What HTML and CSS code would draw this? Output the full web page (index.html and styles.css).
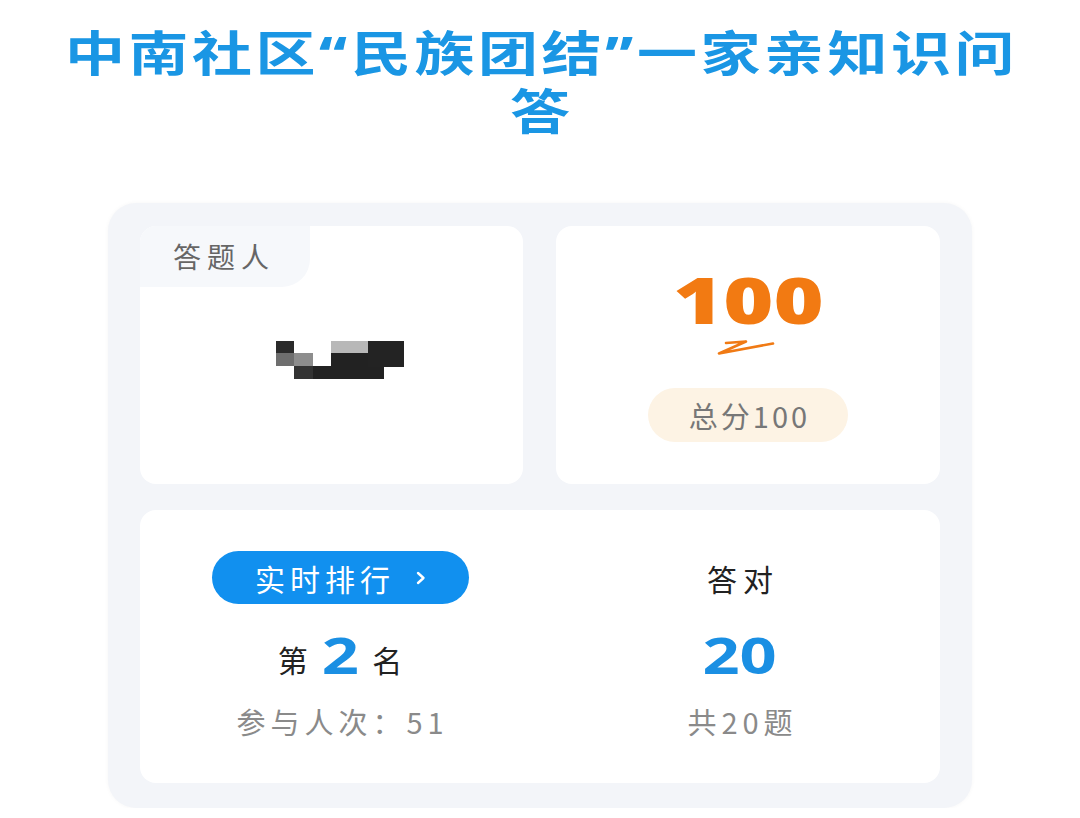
FILE: index.html
```html
<!DOCTYPE html>
<html lang="zh-CN">
<head>
<meta charset="utf-8">
<title>中南社区“民族团结”一家亲知识问答</title>
<link rel="stylesheet" href="styles.css">
</head>
<body>
<h1 class="title"><span class="line">中南社区<span class="q">“</span>民族团结<span class="q">”</span>一家亲知识问</span><span class="line">答</span></h1>
<main class="panel">
  <section class="card person">
    <div class="tab">答题人</div>
    <div class="name">
      <svg width="128" height="38" viewBox="0 0 128 38" aria-label="打码姓名">
        <rect x="0" y="0" width="18" height="12" fill="#2b2b2b"/>
        <rect x="0" y="12" width="18" height="13" fill="#6e6e6e"/>
        <rect x="18" y="12" width="19" height="13" fill="#8d8d8d"/>
        <rect x="18" y="25" width="19" height="13" fill="#333"/>
        <rect x="37" y="25" width="18" height="13" fill="#222"/>
        <rect x="55" y="0" width="37" height="12" fill="#b8b8b8"/>
        <rect x="55" y="12" width="53" height="26" fill="#222"/>
        <rect x="92" y="0" width="36" height="26" fill="#232323"/>
      </svg>
    </div>
  </section>
  <section class="card score">
    <div class="big-score"><span>100</span></div>
    <svg class="swoosh" width="60" height="18" viewBox="0 0 60 18">
      <path d="M11 5 L31 3.5 L4 15.5 L58 5.5" fill="none" stroke="#f07a14" stroke-width="2.6" stroke-linejoin="round" stroke-linecap="round"/>
    </svg>
    <div class="pill">总分100</div>
  </section>
  <section class="card stats">
    <div class="col">
      <div class="row r1"><button class="rank-btn">实时排行<svg width="12" height="16" viewBox="0 0 12 16"><path d="M3 3 L8.5 8 L3 13" fill="none" stroke="#fff" stroke-width="2.4" stroke-linecap="round" stroke-linejoin="round"/></svg></button></div>
      <div class="row r2"><span class="cn">第</span><span class="num small"><span>2</span></span><span class="cn">名</span></div>
      <div class="row r3 sub">参与人次：51</div>
    </div>
    <div class="col">
      <div class="row r1 label">答对</div>
      <div class="row r2"><span class="num"><span>20</span></span></div>
      <div class="row r3 sub">共20题</div>
    </div>
  </section>
</main>
</body>
</html>
```
FILE: styles.css
```css
* { box-sizing: border-box; }
html, body { margin: 0; padding: 0; background: #fff; }
body {
  width: 1080px;
  font-family: "Noto Sans CJK SC", "Noto Sans", sans-serif;
}
.title {
  margin: 21px 0 0;
  text-align: center;
  font-size: 48px;
  line-height: 58px;
  letter-spacing: 2.8px;
  font-weight: 700;
  color: #1a96e4;
}
.title .line {
  display: block;
  width: fit-content;
  margin: 0 auto;
  height: 58px;
  padding-left: 3px;
  white-space: nowrap;
  transform: scaleX(1.25);
}
.title .q {
  font-family: "Noto Sans", "DejaVu Sans", sans-serif;
  font-weight: 800;
  letter-spacing: 3px;
}
.panel {
  width: 864px;
  height: 605px;
  margin: 66px auto 0;
  padding: 23px 32px 25px;
  background: #f3f5f9;
  border-radius: 28px;
  box-shadow: 0 0 4px rgba(0, 0, 0, 0.04);
  display: grid;
  grid-template-columns: 383px 384px;
  grid-template-rows: 258px 273px;
  column-gap: 33px;
  row-gap: 26px;
}
.card {
  background: #fff;
  border-radius: 16px;
}
.person {
  display: flex;
  flex-direction: column;
}
.tab {
  width: 170px;
  height: 61px;
  background: #f6f8fb;
  border-radius: 16px 0 28px 0;
  color: #666;
  font-size: 28px;
  letter-spacing: 6px;
  line-height: 61px;
  padding-left: 33px;
}
.name {
  display: flex;
  justify-content: center;
  padding-top: 54px;
}
.name svg { margin-left: 16px; }
.score {
  display: flex;
  flex-direction: column;
  align-items: center;
  padding-top: 44px;
}
.big-score {
  height: 60px;
  line-height: 60px;
  font-family: "Open Sans", "Noto Sans", sans-serif;
  font-weight: 800;
  font-size: 64px;
  color: #f27a12;
}
.big-score span {
  display: inline-block;
  transform: scaleX(1.34);
}
.swoosh { margin-top: 8px; margin-left: -6px; }
.pill {
  margin-top: 32px;
  width: 200px;
  height: 54px;
  border-radius: 27px;
  background: #fdf3e4;
  color: #777;
  font-size: 29px;
  letter-spacing: 3px;
  line-height: 54px;
  text-align: center;
  padding-left: 3px;
}
.stats {
  grid-column: 1 / span 2;
  display: grid;
  grid-template-columns: 1fr 1fr;
  padding: 41px 0 47px;
}
.col {
  display: flex;
  flex-direction: column;
  align-items: center;
  gap: 26px;
}
.row {
  display: flex;
  align-items: center;
  justify-content: center;
}
.r1 { height: 53px; }
.r2 { height: 50px; gap: 14px; }
.r3 { height: 30px; }
.rank-btn {
  width: 257px;
  height: 53px;
  border: none;
  border-radius: 27px;
  background: #1190ef;
  color: #fff;
  font-family: "Noto Sans CJK SC", sans-serif;
  font-size: 30px;
  letter-spacing: 5px;
  display: flex;
  align-items: center;
  justify-content: center;
  gap: 20px;
  padding: 0 0 0 2px;
}
.label {
  font-size: 30px;
  letter-spacing: 6px;
  padding-left: 6px;
  color: #222;
}
.cn {
  font-size: 30px;
  color: #222;
  padding-top: 8px;
}
.num {
  font-family: "Open Sans", "Noto Sans", sans-serif;
  font-weight: 700;
  font-size: 50px;
  line-height: 50px;
  color: #1a8fe3;
}
.num span {
  display: inline-block;
  transform: scaleX(1.3);
}
.num.small { padding: 0 4px; }
.sub {
  font-size: 29px;
  letter-spacing: 5px;
  padding-left: 5px;
  color: #8a8a8a;
}
```
